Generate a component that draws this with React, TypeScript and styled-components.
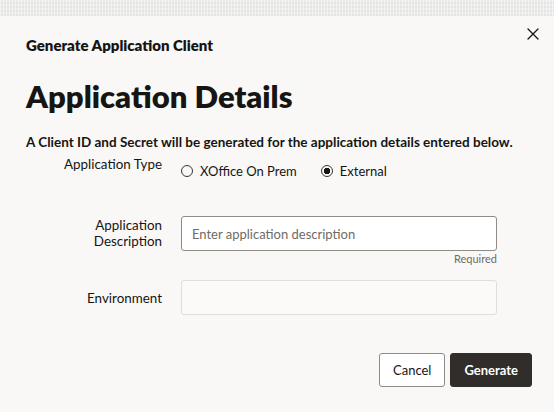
import { createGlobalStyle, styled } from "styled-components";

const GlobalStyle = createGlobalStyle`
  html, body {
    margin: 0;
    padding: 0;
    background: #f9f8f6;
  }
  body {
    font-family: Lato, "Noto Sans", sans-serif;
    color: #161513;
  }
`;

function CloseIcon() {
  return (
    <svg width="12" height="12" viewBox="0 0 12 12" fill="none">
      <path d="M1 1l10 10M11 1L1 11" stroke="#161513" strokeWidth="1.3" strokeLinecap="round" />
    </svg>
  );
}

function App() {
  return (
    <>
      <GlobalStyle />
      <Backdrop />
      <Dialog>
        <Header>
          <Title>Generate Application Client</Title>
          <CloseButton aria-label="Close">
            <CloseIcon />
          </CloseButton>
        </Header>
        <Heading>Application Details</Heading>
        <Intro>A Client ID and Secret will be generated for the application details entered below.</Intro>
        <Form>
          <Label $top={1}>Application Type</Label>
          <RadioGroup>
            <RadioOption>
              <Radio />
              XOffice On Prem
            </RadioOption>
            <RadioOption>
              <Radio $checked />
              External
            </RadioOption>
          </RadioGroup>

          <Label $top={1}>
            Application
            <br />
            Description
          </Label>
          <Field>
            <Input placeholder="Enter application description" />
            <Hint>Required</Hint>
          </Field>

          <Label>Environment</Label>
          <Field>
            <Input $muted />
          </Field>
        </Form>
        <Footer>
          <Button>Cancel</Button>
          <Button $primary>Generate</Button>
        </Footer>
      </Dialog>
    </>
  );
}

const Backdrop = styled.div`
  height: 16px;
  background-color: #ebebea;
  background-image: repeating-linear-gradient(
      90deg,
      rgba(255, 255, 255, 0.55) 0 1px,
      transparent 1px 3px
    ),
    repeating-linear-gradient(0deg, rgba(0, 0, 0, 0.03) 0 2px, transparent 2px 4px);
`;

const Dialog = styled.div`
  background: #f9f8f6;
  padding: 18px 26px 0 26px;
  height: 396px;
  box-sizing: border-box;
`;

const Header = styled.div`
  display: flex;
  justify-content: space-between;
  align-items: flex-start;
`;

const Title = styled.h1`
  margin: 0;
  font-size: 15px;
  line-height: 22px;
  font-weight: 800;
`;

const CloseButton = styled.button`
  border: none;
  background: none;
  padding: 0;
  margin: -7px -12px 0 0;
  width: 14px;
  height: 14px;
  display: flex;
  align-items: center;
  justify-content: center;
`;

const Heading = styled.h2`
  margin: 22px 0 0;
  font-size: 31px;
  line-height: 36px;
  font-weight: 800;
`;

const Intro = styled.p`
  margin: 19px 0 0;
  font-size: 13.5px;
  line-height: 18px;
  font-weight: 700;
`;

const Form = styled.div`
  display: grid;
  grid-template-columns: 136px 316px;
  column-gap: 19px;
  row-gap: 13px;
  align-items: center;
  margin-top: 4px;
`;

// $top pins a label to the top of its row, offset by the given pixels
const Label = styled.div<{ $top?: number }>`
  text-align: right;
  font-size: 13.4px;
  line-height: 16px;
  color: #161513;
  align-self: ${(p) => (p.$top !== undefined ? "start" : "center")};
  padding-top: ${(p) => p.$top ?? 0}px;
`;

const RadioGroup = styled.div`
  display: flex;
  gap: 24px;
  padding-top: 4px;
  height: 44px;
`;

const RadioOption = styled.label`
  display: flex;
  align-items: center;
  gap: 7px;
  height: 24px;
  font-size: 13px;
  color: #161513;
`;

const Radio = styled.span<{ $checked?: boolean }>`
  width: 10px;
  height: 10px;
  border-radius: 50%;
  border: 1px solid #3a3632;
  box-sizing: content-box;
  background: ${(p) => (p.$checked ? "radial-gradient(circle, #161513 0 3px, transparent 3.5px)" : "transparent")};
`;

const Field = styled.div`
  display: flex;
  flex-direction: column;
`;

const Input = styled.input<{ $muted?: boolean }>`
  box-sizing: border-box;
  width: 316px;
  height: 35px;
  padding: 0 10px;
  border-radius: 3px;
  border: 1px solid ${(p) => (p.$muted ? "#e0dedb" : "#8f8b86")};
  background-color: ${(p) => (p.$muted ? "#fbfaf9" : "#ffffff")};
  font-family: inherit;
  font-size: 13px;
  color: #161513;

  &::placeholder {
    color: #6f6b66;
  }
`;

const Hint = styled.div`
  text-align: right;
  font-size: 11px;
  line-height: 16px;
  color: #6f6b66;
`;

const Footer = styled.div`
  display: flex;
  justify-content: flex-end;
  gap: 5px;
  margin-top: 38px;
  margin-right: -4px;
`;

const Button = styled.button<{ $primary?: boolean }>`
  height: 34px;
  padding: 0 13px;
  border-radius: 3px;
  font-family: inherit;
  font-size: 13px;
  font-weight: ${(p) => (p.$primary ? 700 : 400)};
  border: 1px solid ${(p) => (p.$primary ? "#312d2a" : "#8f8b86")};
  background: ${(p) => (p.$primary ? "#312d2a" : "#ffffff")};
  color: ${(p) => (p.$primary ? "#ffffff" : "#161513")};
`;

export default App;
